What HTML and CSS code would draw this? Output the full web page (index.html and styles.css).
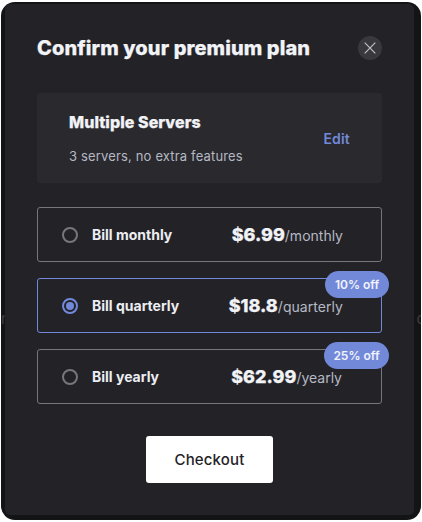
FILE: index.html
```
<!DOCTYPE html>
<html lang="en">
<head>
<meta charset="utf-8">
<title>Confirm your premium plan</title>
<link rel="stylesheet" href="styles.css">
</head>
<body>
<div class="backdrop">
  <span class="peek peek-left">n</span>
  <span class="peek peek-right">c</span>
  <main class="modal">
    <header class="head">
      <h1 class="title">Confirm your premium plan</h1>
      <button class="close" aria-label="Close"><svg width="12" height="12" viewBox="0 0 12 12"><path d="M.7.7l10.600 10.600M11.300.7L.7 11.300"/></svg></button>
    </header>
    <section class="summary">
      <div>
        <h2 class="plan">Multiple Servers</h2>
        <p class="detail">3 servers, no extra features</p>
      </div>
      <a class="edit">Edit</a>
    </section>
    <div class="options">
      <div class="option">
        <span class="radio"></span><span class="label">Bill monthly</span>
        <span class="cost"><b class="amount">$6.99</b><span class="period">/monthly</span></span>
      </div>
      <div class="option selected">
        <span class="radio"></span><span class="label">Bill quarterly</span>
        <span class="cost"><b class="amount">$18.8</b><span class="period">/quarterly</span></span>
        <span class="badge">10% off</span>
      </div>
      <div class="option yearly">
        <span class="radio"></span><span class="label">Bill yearly</span>
        <span class="cost"><b class="amount">$62.99</b><span class="period">/yearly</span></span>
        <span class="badge">25% off</span>
      </div>
    </div>
    <button class="checkout">Checkout</button>
  </main>
</div>
</body>
</html>
```
FILE: styles.css
```
* { box-sizing: border-box; }
body {
  margin: 0;
  height: 522px;
  padding: 2px 1px;
  overflow: hidden;
  background: #fff;
  font-family: Inter, "Liberation Sans", sans-serif;
}
h1, h2, p { margin: 0; }
button { border: 0; padding: 0; font-family: inherit; }
.backdrop {
  position: relative;
  height: 518px;
  padding: 2px 7px 5px 4px;
  border-radius: 14px;
  background: #131416;
  overflow: hidden;
}
.peek {
  position: absolute;
  top: 307px;
  font-size: 15px;
  line-height: 20px;
  color: #403e3c;
}
.peek-left { left: 0; }
.peek-right { right: -4px; }
.modal {
  position: relative;
  display: flex;
  flex-direction: column;
  height: 511px;
  padding: 32px 32px 0;
  border-radius: 5px;
  background: #232227;
}
.head {
  display: flex;
  align-items: center;
  justify-content: space-between;
  height: 24px;
}
.title {
  font-size: 20px;
  font-weight: 800;
  line-height: 24px;
  letter-spacing: .1px;
  color: #f1f3f7;
  -webkit-text-stroke: .25px #f1f3f7;
  white-space: nowrap;
}
.close {
  display: grid;
  place-items: center;
  width: 24px;
  height: 24px;
  border-radius: 50%;
  background: #39383d;
}
.close svg { fill: none; stroke: #c5c6cb; stroke-width: 1.1; }
.summary {
  display: flex;
  align-items: center;
  justify-content: space-between;
  height: 90px;
  margin-top: 33px;
  padding: 0 32px;
  border-radius: 3px;
  background: #2a292e;
}
.plan {
  font-size: 16px;
  font-weight: 800;
  line-height: 20px;
  letter-spacing: .06px;
  color: #f1f3f7;
  -webkit-text-stroke: .25px #f1f3f7;
}
.detail {
  margin-top: 15px;
  font-size: 13px;
  line-height: 18px;
  letter-spacing: .16px;
  color: #b5b9c3;
}
.edit {
  font-size: 14px;
  font-weight: 600;
  letter-spacing: .2px;
  color: #7289da;
}
.options { display: grid; gap: 16px; margin-top: 24px; }
.option {
  position: relative;
  display: flex;
  align-items: center;
  height: 55px;
  padding: 0 38px 0 24px;
  border: 1px solid #77767a;
  border-radius: 3px;
}
.radio {
  display: grid;
  place-items: center;
  width: 16px;
  height: 16px;
  border: 2px solid #77767a;
  border-radius: 50%;
}
.label {
  margin-left: 14px;
  font-size: 14px;
  font-weight: 700;
  color: #eceef2;
}
.cost { margin-left: auto; white-space: nowrap; }
.amount {
  font-size: 18px;
  font-weight: 800;
  color: #f1f3f7;
  -webkit-text-stroke: .25px #f1f3f7;
}
.period { font-size: 14px; color: #b5b9c3; }
.selected, .selected .radio { border-color: #7289da; }
.selected .period { letter-spacing: .05px; }
.selected .radio::before {
  content: "";
  width: 8px;
  height: 8px;
  border-radius: 50%;
  background: #7289da;
}
.badge {
  position: absolute;
  top: -8px;
  right: -8px;
  width: 64px;
  height: 27px;
  border-radius: 14px;
  background: #7289da;
  font-size: 12px;
  font-weight: 600;
  line-height: 27px;
  text-align: center;
  color: #f1f3fa;
}
.yearly { padding-right: 39px; }
.yearly .badge { width: 65px; }
.checkout {
  align-self: center;
  width: 127px;
  height: 47px;
  margin-top: 32px;
  border-radius: 3px;
  background: #fff;
  font-size: 15px;
  font-weight: 500;
  letter-spacing: .15px;
  color: #232227;
}
```
